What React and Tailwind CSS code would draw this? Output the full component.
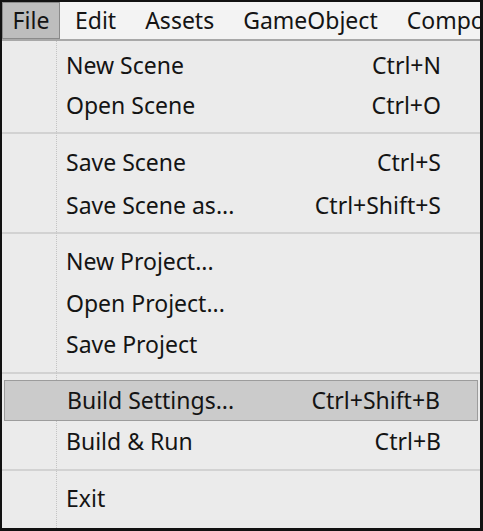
const menu = [
  { label: "New Scene", key: "Ctrl+N", h: "h-[40px]" },
  { label: "Open Scene", key: "Ctrl+O", h: "h-[40px]" },
  { sep: true, h: "h-[16px]" },
  { label: "Save Scene", key: "Ctrl+S", h: "h-[42px]" },
  { label: "Save Scene as...", key: "Ctrl+Shift+S", h: "h-[44px]" },
  { sep: true, h: "h-[12px]" },
  { label: "New Project...", h: "h-[44px]" },
  { label: "Open Project...", h: "h-[40px]" },
  { label: "Save Project", h: "h-[42px]" },
  { sep: true, h: "h-[15px]" },
  { label: "Build Settings...", key: "Ctrl+Shift+B", h: "h-[41px]", active: true },
  { label: "Build & Run", key: "Ctrl+B", h: "h-[40px]" },
  { sep: true, h: "h-[18px]" },
  { label: "Exit", h: "h-[38px]" },
];

const App = () => {
  return (
    <div
      className="w-[483px] h-[531px] bg-[#ebebeb] border-t-2 border-l-2 border-r-[3px] border-b-[3px] border-[#111] flex flex-col text-[#141414] overflow-hidden"
      style={{ fontFamily: '"Noto Sans", "Open Sans", sans-serif' }}
    >
      {/* menu bar */}
      <div className="h-[39px] bg-[#f3f3f3] border-b-2 border-[#a8a8a8] flex items-stretch text-[23px] whitespace-nowrap overflow-hidden">
        <div className="w-[58px] shrink-0 bg-[#bdbdbd] border border-[#8a8a8a] flex items-center justify-center">File</div>
        <div className="pl-[15px] flex items-center gap-[29px] shrink-0">
          <span>Edit</span>
          <span>Assets</span>
          <span>GameObject</span>
          <span>Component</span>
        </div>
      </div>

      {/* dropdown */}
      <div className="flex-1 relative pt-[4px]">
        <div className="absolute left-[54px] top-0 bottom-0 border-l border-dotted border-[#c4c4c4]" />
        {menu.map((item, i) =>
          item.sep ? (
            <div key={i} className={`${item.h} flex items-center`}>
              <div className="w-full h-[2px] bg-[#d2d2d2]" />
            </div>
          ) : (
            <div key={i} className={`${item.h} px-[2px] flex`}>
              <div
                className={`flex-1 flex items-center justify-between pl-[62px] pr-[37px] text-[23px] whitespace-nowrap relative ${
                  item.active ? "bg-[#cbcbcb] border border-[#9c9c9c]" : ""
                }`}
              >
                <span>{item.label}</span>
                {item.key && <span>{item.key}</span>}
              </div>
            </div>
          )
        )}
      </div>
    </div>
  );
};

export default App;
